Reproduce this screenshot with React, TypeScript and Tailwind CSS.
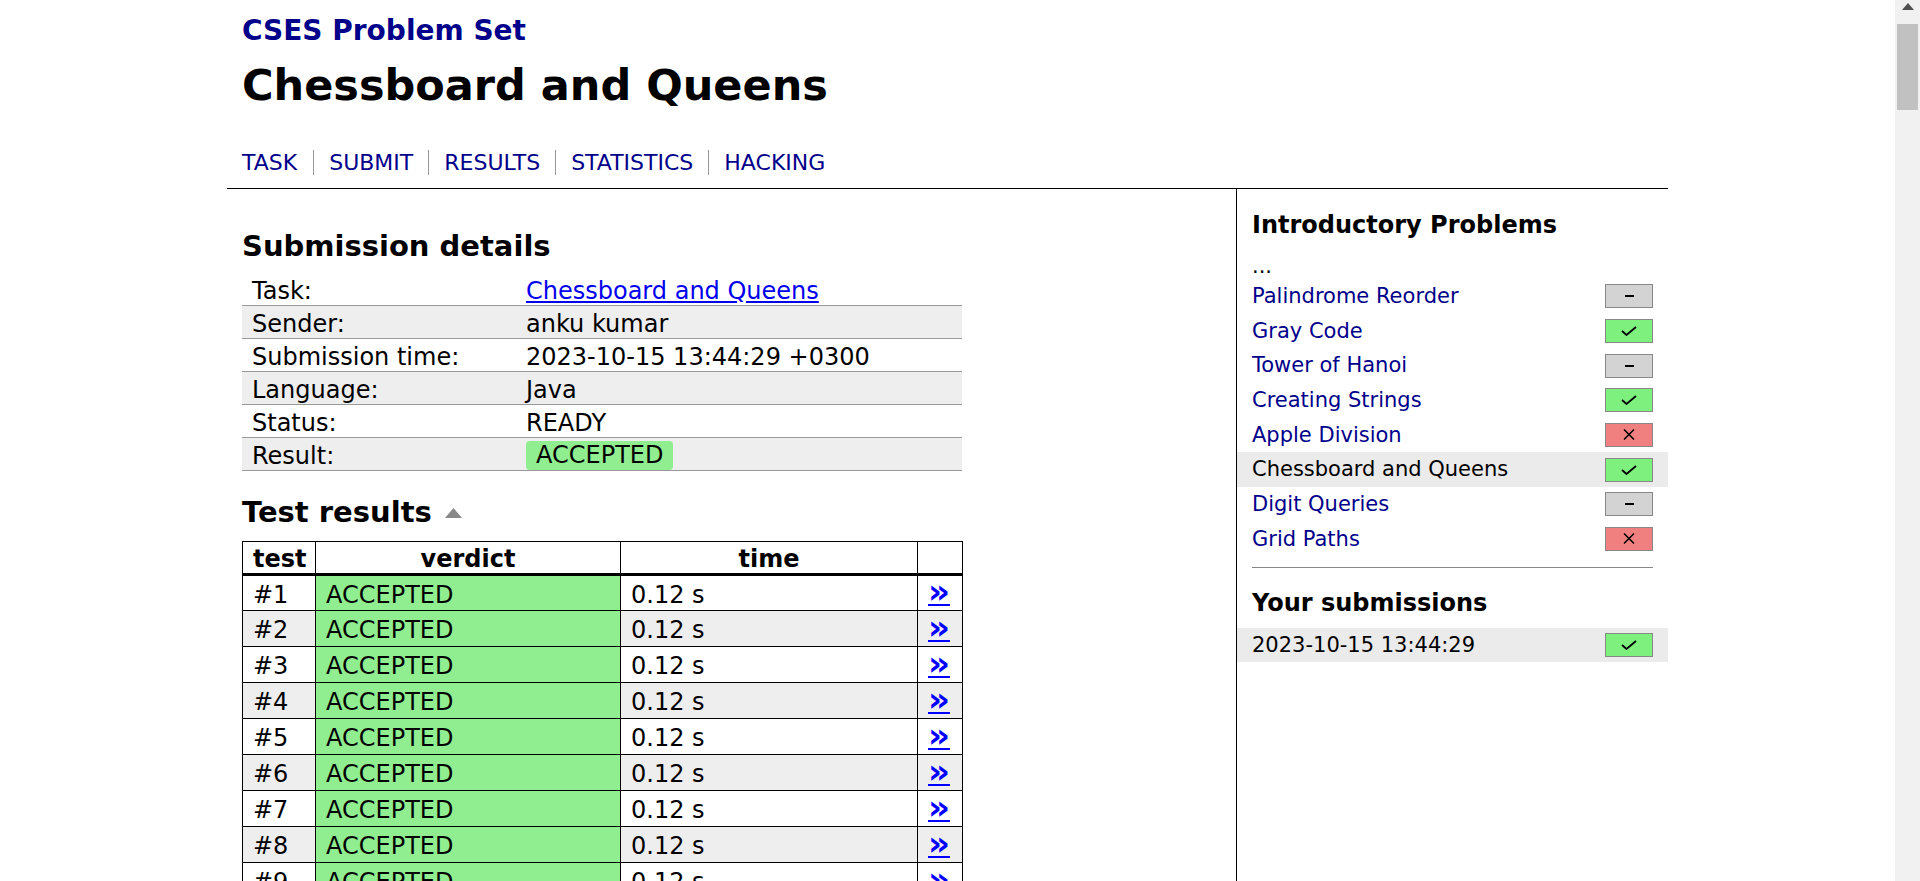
import React from "react";

type Status = "none" | "ok" | "fail";

const problems: { name: string; status: Status; current?: boolean }[] = [
  { name: "Palindrome Reorder", status: "none" },
  { name: "Gray Code", status: "ok" },
  { name: "Tower of Hanoi", status: "none" },
  { name: "Creating Strings", status: "ok" },
  { name: "Apple Division", status: "fail" },
  { name: "Chessboard and Queens", status: "ok", current: true },
  { name: "Digit Queries", status: "none" },
  { name: "Grid Paths", status: "fail" },
];

const tests = Array.from({ length: 20 }, (_, i) => i + 1);

function StatusBox({ status }: { status: Status }) {
  const bg =
    status === "ok" ? "bg-[#7ef07e]" : status === "fail" ? "bg-[#f08080]" : "bg-[#d3d3d3]";
  return (
    <span className={`flex h-[24px] w-[48px] items-center justify-center border border-[#888] ${bg}`}>
      {status === "ok" && (
        <svg width="16" height="10" viewBox="0 0 16 10">
          <polyline points="1,5 5.5,9 15,1" fill="none" stroke="#000" strokeWidth="1.8" />
        </svg>
      )}
      {status === "none" && <span className="h-[2px] w-[9px] bg-black" />}
      {status === "fail" && (
        <svg width="12" height="11" viewBox="0 0 12 11">
          <path d="M1 0.5 L11 10.5 M11 0.5 L1 10.5" stroke="#000" strokeWidth="1.5" />
        </svg>
      )}
    </span>
  );
}

function DetailRow({ label, children, shaded }: { label: string; children: React.ReactNode; shaded?: boolean }) {
  return (
    <div className={`flex h-[33px] items-center border-b border-[#999] pt-[3px] ${shaded ? "bg-[#eee]" : "bg-white"}`}>
      <div className="w-[274px] pl-[10px]">{label}</div>
      <div className="pl-[10px]">{children}</div>
    </div>
  );
}

export default function App() {
  return (
    <div className="flex h-[881px] overflow-hidden bg-white font-['DejaVu_Sans',Verdana,sans-serif] text-black">
      <div className="flex-1 overflow-hidden">
        <div className="mx-auto w-[1441px]">
          {/* Header */}
          <div className="border-b border-black px-[15px] pt-[15px] pb-[13px]">
            <div className="text-[28px] font-bold leading-[32px] text-[#00008b]">CSES Problem Set</div>
            <h1 className="mt-[13px] text-[43px] font-bold leading-[50px]">Chessboard and Queens</h1>
            <div className="mt-[40px] flex text-[22px] leading-[25px] text-[#00008b]">
              <span className="pr-[16px]">TASK</span>
              <span className="border-l border-[#999] px-[15px]">SUBMIT</span>
              <span className="border-l border-[#999] px-[15px]">RESULTS</span>
              <span className="border-l border-[#999] px-[15px]">STATISTICS</span>
              <span className="border-l border-[#999] px-[15px]">HACKING</span>
            </div>
          </div>

          <div className="flex">
            {/* Main content */}
            <div className="w-[1010px] border-r border-black px-[15px] pb-[40px]">
              <h2 className="mt-[40px] text-[29px] font-bold leading-[34px]">Submission details</h2>
              <div className="mt-[10px] w-[720px] text-[24px] leading-[28px]">
                <DetailRow label="Task:">
                  <a href="#" className="text-[#0000ee] underline">Chessboard and Queens</a>
                </DetailRow>
                <DetailRow label="Sender:" shaded>anku kumar</DetailRow>
                <DetailRow label="Submission time:">2023-10-15 13:44:29 +0300</DetailRow>
                <DetailRow label="Language:" shaded>Java</DetailRow>
                <DetailRow label="Status:">READY</DetailRow>
                <DetailRow label="Result:" shaded>
                  <span className="inline-block rounded-[4px] bg-[#90ee90] px-[10px] leading-[29px]">ACCEPTED</span>
                </DetailRow>
              </div>

              <div className="mt-[24px] flex items-center gap-[13px]">
                <h2 className="text-[29px] font-bold leading-[34px]">Test results</h2>
                <svg width="17" height="10" viewBox="0 0 17 10" className="mt-[2px]">
                  <polygon points="8.5,0 17,10 0,10" fill="#888" />
                </svg>
              </div>

              <table className="mt-[12px] w-[720px] table-fixed border-collapse text-[24px] leading-[28px]">
                <colgroup>
                  <col className="w-[73px]" />
                  <col className="w-[305px]" />
                  <col className="w-[297px]" />
                  <col className="w-[45px]" />
                </colgroup>
                <thead>
                  <tr className="h-[33px] border-b-[3px] border-black">
                    <th className="border border-black px-[10px] pt-[2px] text-left font-bold">test</th>
                    <th className="border border-black px-[10px] pt-[2px] text-center font-bold">verdict</th>
                    <th className="border border-black px-[10px] pt-[2px] text-center font-bold">time</th>
                    <th className="border border-black" />
                  </tr>
                </thead>
                <tbody>
                  {tests.map((t) => (
                    <tr key={t} className={`h-[36px] ${t % 2 === 0 ? "bg-[#eee]" : "bg-white"}`}>
                      <td className="border border-black px-[10px] pt-[3px]">#{t}</td>
                      <td className="border border-black bg-[#90ee90] px-[10px] pt-[3px]">ACCEPTED</td>
                      <td className="border border-black px-[10px] pt-[3px]">0.12 s</td>
                      <td className="border border-black px-[10px] pb-[4px]">
                        <a href="#" className="block text-[34px] font-bold leading-[24px] text-[#0000ff] underline decoration-2">»</a>
                      </td>
                    </tr>
                  ))}
                </tbody>
              </table>
            </div>

            {/* Sidebar */}
            <div className="w-[431px] text-[21px]">
              <h4 className="mt-[22px] px-[15px] text-[24px] font-bold leading-[28px]">Introductory Problems</h4>
              <div className="mt-[10px] h-[30px] px-[15px] leading-[34px]">...</div>
              {problems.map((p) => (
                <div
                  key={p.name}
                  className={`flex h-[34.67px] items-center justify-between px-[15px] ${p.current ? "bg-[#ebebeb] text-black" : "text-[#00008b]"}`}
                >
                  <span className="pt-[1px]">{p.name}</span>
                  <StatusBox status={p.status} />
                </div>
              ))}
              <div className="mx-[15px] mt-[11px] h-px bg-[#888]" />
              <h4 className="mt-[21px] px-[15px] text-[24px] font-bold leading-[28px]">Your submissions</h4>
              <div className="mt-[11px] flex h-[34px] items-center justify-between bg-[#ebebeb] px-[15px]">
                <span className="pt-[1px]">2023-10-15 13:44:29</span>
                <StatusBox status="ok" />
              </div>
            </div>
          </div>
        </div>
      </div>

      {/* Scrollbar */}
      <div className="flex w-[25px] flex-col items-center bg-[#f1f1f1]">
        <svg width="12" height="7" viewBox="0 0 12 7" className="mt-[3px]">
          <polygon points="6,0 12,7 0,7" fill="#505050" />
        </svg>
        <div className="mt-[14px] h-[86px] w-[21px] bg-[#c1c1c1]" />
      </div>
    </div>
  );
}
